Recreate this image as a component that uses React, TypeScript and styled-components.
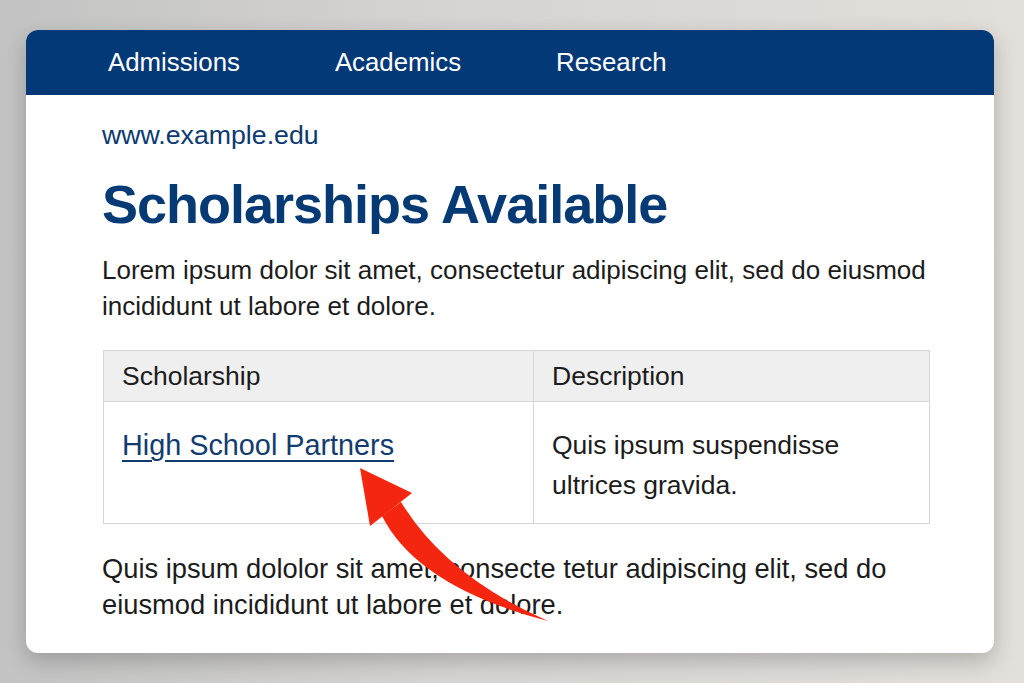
import styled, { createGlobalStyle } from 'styled-components'

const GlobalStyle = createGlobalStyle`
  html, body {
    margin: 0;
    padding: 0;
  }
  body {
    font-family: "Liberation Sans", Arial, sans-serif;
  }
`

export const Page = styled.div`
  box-sizing: border-box;
  width: 1024px;
  height: 683px;
  padding: 30px 30px 30px 26px;
  background: linear-gradient(90deg, #c3c3c3 0%, #d6d5d3 45%, #e3dfda 100%);
  overflow: hidden;
`
export const Card = styled.div`
  position: relative;
  width: 968px;
  height: 623px;
  background: #fff;
  border-radius: 12px;
  overflow: hidden;
  box-shadow: 0 8px 22px rgba(0, 0, 0, 0.22);
  display: flex;
  flex-direction: column;
`
export const NavBar = styled.nav`
  display: flex;
  align-items: center;
  gap: 95px;
  height: 65px;
  padding-left: 82px;
  background: #033977;
  flex-shrink: 0;
`
export const NavItem = styled.a`
  color: #fff;
  font-size: 25.8px;
  text-decoration: none;
`
export const Content = styled.main`
  display: flex;
  flex-direction: column;
  align-items: flex-start;
  padding: 0 76px;
`
export const SiteUrl = styled.div`
  margin-top: 25px;
  font-size: 26.7px;
  line-height: 30px;
  color: #0c3a70;
`
export const Title = styled.h1`
  margin: 24px 0 0;
  font-size: 54px;
  line-height: 60px;
  letter-spacing: -1px;
  font-weight: 700;
  color: #053a74;
`
export const Text = styled.p<{ $top: number; $size: number }>`
  margin: ${(p) => p.$top}px 0 0;
  font-size: ${(p) => p.$size}px;
  line-height: 36px;
  color: #1c1c1c;
  white-space: nowrap;
`
export const Table = styled.table`
  margin: 26px 0 0 1px;
  width: 826px;
  border-collapse: collapse;
  table-layout: fixed;
  font-size: 26.5px;
  color: #1c1c1c;
`
export const HeadCell = styled.th<{ $w: number }>`
  box-sizing: border-box;
  width: ${(p) => p.$w}px;
  height: 51px;
  padding: 0 18px;
  text-align: left;
  font-weight: 400;
  background: #efefef;
  border: 1px solid #d6d6d6;
`
export const Cell = styled.td`
  height: 122px;
  box-sizing: border-box;
  padding: 23px 18px 0;
  vertical-align: top;
  line-height: 40px;
  border: 1px solid #d6d6d6;
`
export const PartnerLink = styled.a`
  color: #123c6f;
  font-size: 28.8px;
  text-decoration: underline;
  text-underline-offset: 5px;
  text-decoration-thickness: 1.5px;
`
export const Annotation = styled.svg`
  position: absolute;
  left: 0;
  top: 0;
  width: 968px;
  height: 623px;
  pointer-events: none;
`

const navItems = ['Admissions', 'Academics', 'Research']

const App = () => {
  return (
    <Page>
      <GlobalStyle />
      <Card>
        <NavBar>
          {navItems.map((item) => (
            <NavItem key={item}>{item}</NavItem>
          ))}
        </NavBar>
        <Content>
          <SiteUrl>www.example.edu</SiteUrl>
          <Title>Scholarships Available</Title>
          <Text $top={18} $size={26}>
            Lorem ipsum dolor sit amet, consectetur adipiscing elit, sed do eiusmod
            <br />
            incididunt ut labore et dolore.
          </Text>
          <Table>
            <thead>
              <tr>
                <HeadCell $w={430}>Scholarship</HeadCell>
                <HeadCell $w={396}>Description</HeadCell>
              </tr>
            </thead>
            <tbody>
              <tr>
                <Cell>
                  <PartnerLink href="#">High School Partners</PartnerLink>
                </Cell>
                <Cell>
                  Quis ipsum suspendisse
                  <br />
                  ultrices gravida.
                </Cell>
              </tr>
            </tbody>
          </Table>
          <Text $top={27} $size={27.3}>
            Quis ipsum dololor sit amet, consecte tetur adipiscing elit, sed do
            <br />
            eiusmod incididunt ut labore et dolore.
          </Text>
        </Content>
        {/* red annotation arrow pointing at the link */}
        <Annotation viewBox="0 0 968 623">
          <g fill="#f5260f" transform="translate(-26 -30)">
            <path d="M360 468 L412 493 L370 526 Z" />
            <path d="M401 502 Q446 576 548 621 Q418 587 382 516 Z" />
          </g>
        </Annotation>
      </Card>
    </Page>
  )
}

export default App
